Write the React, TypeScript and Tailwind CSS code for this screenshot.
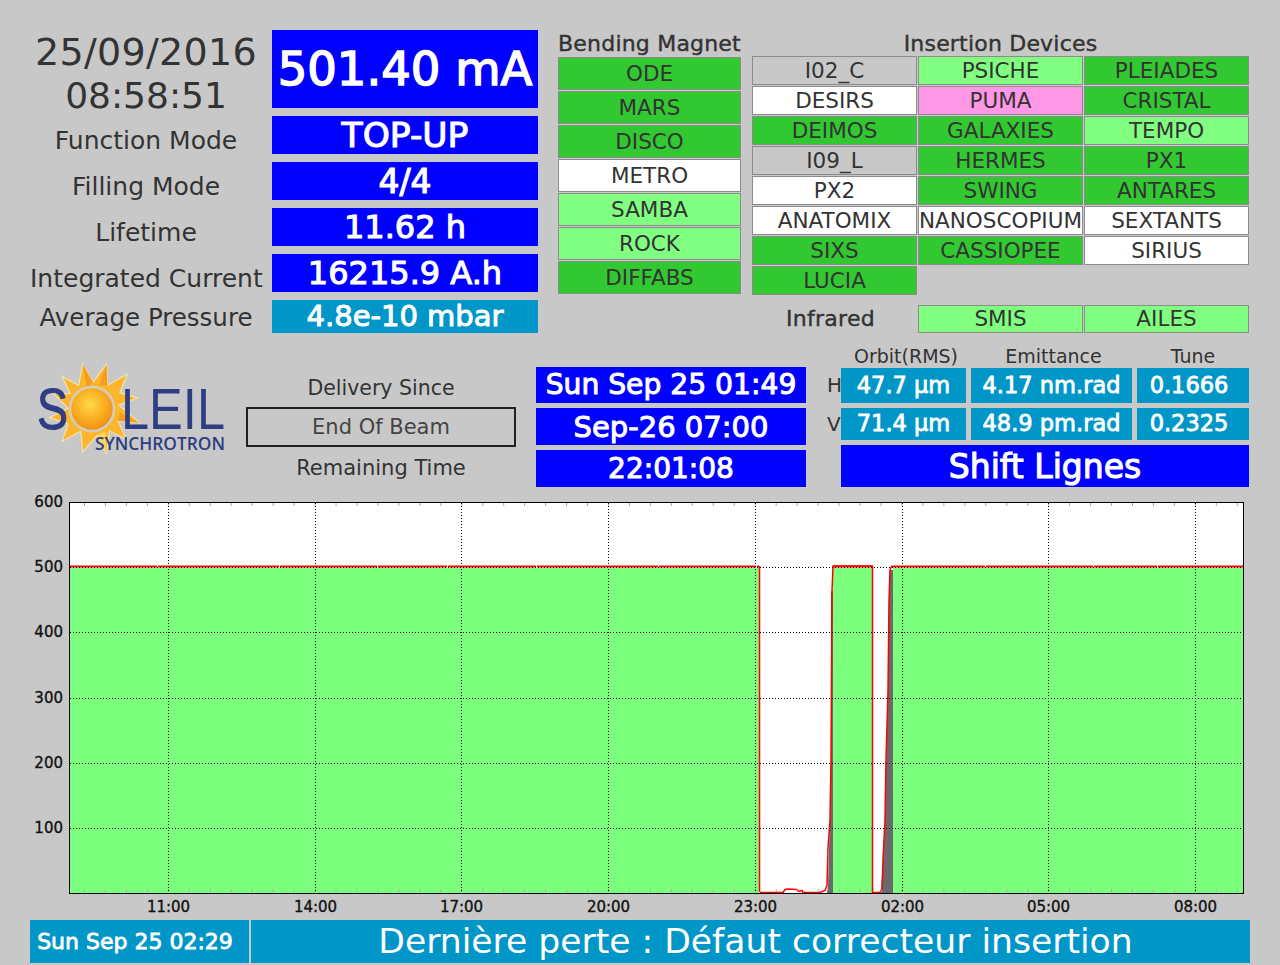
const bendingMagnets = [
  { name: "ODE", tone: "on" },
  { name: "MARS", tone: "on" },
  { name: "DISCO", tone: "on" },
  { name: "METRO", tone: "off" },
  { name: "SAMBA", tone: "open" },
  { name: "ROCK", tone: "open" },
  { name: "DIFFABS", tone: "on" },
];

const insertionDevices = [
  { name: "I02_C", tone: "idle" },
  { name: "PSICHE", tone: "open" },
  { name: "PLEIADES", tone: "on" },
  { name: "DESIRS", tone: "off" },
  { name: "PUMA", tone: "pink" },
  { name: "CRISTAL", tone: "on" },
  { name: "DEIMOS", tone: "on" },
  { name: "GALAXIES", tone: "on" },
  { name: "TEMPO", tone: "open" },
  { name: "I09_L", tone: "idle" },
  { name: "HERMES", tone: "on" },
  { name: "PX1", tone: "on" },
  { name: "PX2", tone: "off" },
  { name: "SWING", tone: "on" },
  { name: "ANTARES", tone: "on" },
  { name: "ANATOMIX", tone: "off" },
  { name: "NANOSCOPIUM", tone: "off" },
  { name: "SEXTANTS", tone: "off" },
  { name: "SIXS", tone: "on" },
  { name: "CASSIOPEE", tone: "on" },
  { name: "SIRIUS", tone: "off" },
  { name: "LUCIA", tone: "on" },
];

const toneClass: Record<string, string> = {
  on: "bg-[#32c832]",
  open: "bg-[#80ff80]",
  off: "bg-white",
  idle: "bg-[#c8c8c8]",
  pink: "bg-[#ff96e6]",
};

function Beamline({ name, tone, height }: { name: string; tone: string; height: string }) {
  return (
    <div
      className={`${toneClass[tone]} ${height} border border-[#8c8c8c] flex items-center justify-center text-[21.5px] leading-none text-[#333333] whitespace-nowrap overflow-hidden`}
    >
      {name}
    </div>
  );
}

const statusRows = [
  { label: "Function Mode", value: "TOP-UP", size: "text-[34.5px]" },
  { label: "Filling Mode", value: "4/4", size: "text-[33px]" },
  { label: "Lifetime", value: "11.62 h", size: "text-[32px]" },
  { label: "Integrated Current", value: "16215.9 A.h", size: "text-[32px]" },
];

function Logo() {
  return (
    <svg width="216" height="100" viewBox="30 358 216 100" className="block" role="img" aria-label="Soleil Synchrotron">
      <defs>
        <radialGradient id="sunCore" cx="45%" cy="40%" r="65%">
          <stop offset="0%" stopColor="#ffd94a" />
          <stop offset="60%" stopColor="#f9a81c" />
          <stop offset="100%" stopColor="#e8861a" />
        </radialGradient>
      </defs>
      <g transform="translate(0 -11.56) scale(1.034)">
        <polygon
          points="80,363 90,381 103,363 104,384 123,373 116,391 133,396 115,403 135,420 114,418 122,436 106,428 103,450 94,432 80,448 78,428 60,438 66,421 48,415 66,406 52,392 68,392 60,375 76,384"
          fill="#fbb62e"
          stroke="#f6e7b0"
          strokeWidth="1"
        />
        <polygon points="80,363 90,381 84,386" fill="#f59c1d" />
        <polygon points="103,363 104,384 96,384" fill="#f59c1d" />
        <polygon points="135,420 114,418 116,410" fill="#f59c1d" />
        <polygon points="103,450 94,432 102,428" fill="#ffd65a" />
      </g>
      <text
        x="37"
        y="429"
        fontFamily="'Liberation Sans', sans-serif"
        fontSize="58"
        fill="#2f3d83"
        stroke="#2f3d83"
        strokeWidth="1"
        textLength="31"
        lengthAdjust="spacingAndGlyphs"
      >
        S
      </text>
      <circle cx="92" cy="409" r="22" fill="url(#sunCore)" stroke="#d4cdbd" strokeWidth="2.5" />
      <text
        x="121"
        y="429"
        fontFamily="'Liberation Sans', sans-serif"
        fontSize="57"
        fill="#2f3d83"
        textLength="104"
        lengthAdjust="spacingAndGlyphs"
      >
        LEIL
      </text>
      <text
        x="95"
        y="450"
        fontFamily="'Open Sans', sans-serif"
        fontSize="18"
        fontWeight="600"
        fill="#2f3d83"
        textLength="130"
        lengthAdjust="spacingAndGlyphs"
      >
        SYNCHROTRON
      </text>
    </svg>
  );
}

// chart helpers, page coordinates inside the svg viewBox
const hours = [
  { x: 168.5, label: "11:00" },
  { x: 315.5, label: "14:00" },
  { x: 461.5, label: "17:00" },
  { x: 608.5, label: "20:00" },
  { x: 755.5, label: "23:00" },
  { x: 902.5, label: "02:00" },
  { x: 1048.5, label: "05:00" },
  { x: 1195.5, label: "08:00" },
];
const levels = [
  { y: 567.5, label: "500" },
  { y: 632.5, label: "400" },
  { y: 698.5, label: "300" },
  { y: 763.5, label: "200" },
  { y: 828.5, label: "100" },
];
const minorTicks = Array.from({ length: 56 }, (_, i) => 84.5 + i * 20.96);

function Chart() {
  const textProps = {
    fontFamily: "'DejaVu Sans', sans-serif",
    fontSize: 15,
    fill: "#111111",
    stroke: "#111111",
    strokeWidth: 0.35,
  };
  return (
    <svg width="1280" height="425" viewBox="0 490 1280 425" className="block">
      <rect x="69" y="502" width="1175" height="391" fill="#ffffff" />
      <rect x="69" y="568" width="690" height="325" fill="#7cff7c" />
      <rect x="833" y="568" width="39" height="325" fill="#7cff7c" />
      <rect x="893" y="568" width="351" height="325" fill="#7cff7c" />

      <polygon
        points="827,893 828,885 829,848 830,820 831,760 831,591 833,591 833,893"
        fill="#6a6a6a"
      />
      <polygon
        points="881,893 883,860 885,820 886,760 888,690 889,601 890,570 893,570 893,893"
        fill="#6a6a6a"
      />

      {/* beam current trace */}
      <line x1="69" x2="759" y1="566.5" y2="566.5" stroke="#ff0000" strokeWidth="2" strokeDasharray="88 1 121 1 97 1 69 1" />
      <line x1="833" x2="872" y1="566.5" y2="566.5" stroke="#ff0000" strokeWidth="2" />
      <line x1="891" x2="1244" y1="566.5" y2="566.5" stroke="#ff0000" strokeWidth="2" strokeDasharray="94 1 107 1 63 1" />
      <line x1="759.5" x2="759.5" y1="566" y2="892" stroke="#ff0000" strokeWidth="1.5" />
      <polyline
        points="760,892.5 783,892.5 785,889.5 788,889 797,889.5 799,891.5 802,890.5 803,892.5 820,892.5 825,890.5 827,885 828,848 830,820 831,760 832,591 833,566.5 833,566 872.5,566 872.5,892.5 880,892.5 882,888 883,860 885,820 886,760 888,690 889,601 890,570 891.5,566.5"
        fill="none"
        stroke="#ff0000"
        strokeWidth="1.5"
      />

      {minorTicks.map((x) => (
        <g key={x}>
          <line x1={x} x2={x} y1="503" y2="506" stroke="#aaaaaa" />
          <line x1={x} x2={x} y1="889" y2="892" stroke="#aaaaaa" />
        </g>
      ))}
      {hours.map((h) => (
        <g key={h.label}>
          <line x1={h.x} x2={h.x} y1="503" y2="893" stroke="#000000" strokeDasharray="1 2" />
          <text x={h.x} y="912" textAnchor="middle" {...textProps}>
            {h.label}
          </text>
        </g>
      ))}
      {levels.map((l) => (
        <g key={l.label}>
          <line x1="70" x2="1243" y1={l.y} y2={l.y} stroke="#000000" strokeDasharray="1 2" />
          <text x="63" y={l.y + 4.5} textAnchor="end" {...textProps}>
            {l.label}
          </text>
        </g>
      ))}
      <text x="63" y="507" textAnchor="end" {...textProps}>
        600
      </text>
      <rect x="69.5" y="502.5" width="1174" height="391" fill="none" stroke="#000000" />
    </svg>
  );
}

export default function App() {
  return (
    <div className="w-[1280px] h-[965px] overflow-hidden bg-[#c8c8c8] pt-[30px] font-['DejaVu_Sans',sans-serif] text-[#333333]">
      {/* top: status values, beamlines */}
      <section className="flex pl-[30px] h-[303px]">
        <div className="grid grid-cols-[232px_266px] grid-rows-[78px_38px_38px_38px_38px_33px] gap-x-[10px] gap-y-[8px]">
          <div className="flex flex-col items-center leading-[43px] pt-[1px]">
            <span className="text-[38px] tracking-[0.3px]">25/09/2016</span>
            <span className="text-[36px]">08:58:51</span>
          </div>
          <div className="bg-[#0000ff] text-white text-[46.5px] [-webkit-text-stroke:1.5px_white] flex items-center justify-center leading-none whitespace-nowrap">
            501.40 mA
          </div>
          {statusRows.map((row) => (
            <div key={row.label} className="contents">
              <div className="text-[25px] leading-none pt-[12px] text-center whitespace-nowrap">{row.label}</div>
              <div
                className={`bg-[#0000ff] text-white ${row.size} [-webkit-text-stroke:1.1px_white] flex items-center justify-center leading-none whitespace-nowrap`}
              >
                {row.value}
              </div>
            </div>
          ))}
          <div className="text-[24.5px] leading-none pt-[6px] text-center whitespace-nowrap">Average Pressure</div>
          <div className="bg-[#0096c8] text-white text-[29px] [-webkit-text-stroke:1px_white] flex items-center justify-center leading-none whitespace-nowrap">
            4.8e-10 mbar
          </div>
        </div>

        <div className="w-[183px] ml-[20px]">
          <div className="h-[27px] text-[22px] leading-[27px] [-webkit-text-stroke:0.4px_#333333] text-center whitespace-nowrap tracking-[0.2px]">
            Bending Magnet
          </div>
          <div className="flex flex-col gap-px">
            {bendingMagnets.map((b) => (
              <Beamline key={b.name} name={b.name} tone={b.tone} height="h-[33px]" />
            ))}
          </div>
        </div>

        <div className="w-[497px] ml-[11px]">
          <div className="h-[26px] text-[22px] leading-[27px] [-webkit-text-stroke:0.4px_#333333] text-center tracking-[0.2px]">
            Insertion Devices
          </div>
          <div className="grid grid-cols-3 gap-px">
            {insertionDevices.map((d) => (
              <Beamline key={d.name} name={d.name} tone={d.tone} height="h-[29px]" />
            ))}
          </div>
          <div className="grid grid-cols-3 gap-px mt-[10px]">
            <div className="h-[28px] pr-[8px] flex items-center justify-center text-[22px] [-webkit-text-stroke:0.4px_#333333] tracking-[0.3px] leading-none">
              Infrared
            </div>
            <Beamline name="SMIS" tone="open" height="h-[28px]" />
            <Beamline name="AILES" tone="open" height="h-[28px]" />
          </div>
        </div>
      </section>

      {/* middle: logo, delivery, orbit */}
      <section className="flex pl-[30px] h-[142px] mt-[12px]">
        <div className="w-[216px] pt-[13px]">
          <Logo />
        </div>

        <div className="w-[270px] pt-[22px] text-[21px]">
          <div className="h-[40px] pt-[2px] flex items-center justify-center text-[20.5px]">Delivery Since</div>
          <div className="h-[40px] pt-[2px] border-2 border-[#222222] flex items-center justify-center text-[#444444]">
            End Of Beam
          </div>
          <div className="h-[40px] pt-[3px] flex items-center justify-center">Remaining Time</div>
        </div>

        <div className="w-[270px] ml-[20px] pt-[22px] flex flex-col gap-[5px] text-white text-[28px] [-webkit-text-stroke:1px_white] leading-none">
          <div className="h-[36px] pt-[1px] bg-[#0000ff] flex items-center justify-center whitespace-nowrap text-[28.2px]">
            Sun Sep 25 01:49
          </div>
          <div className="h-[37px] pt-[1px] bg-[#0000ff] flex items-center justify-center text-[29px]">Sep-26 07:00</div>
          <div className="h-[37px] pt-[1px] bg-[#0000ff] flex items-center justify-center">22:01:08</div>
        </div>

        <div className="w-[423px] ml-[20px]">
          <div className="flex h-[23px] pl-[15px] gap-[5px] text-[19px] leading-[22px] text-center">
            <div className="w-[125px] pl-[5px]">Orbit(RMS)</div>
            <div className="w-[161px] pl-[4px]">Emittance</div>
            <div className="w-[112px]">Tune</div>
          </div>
          <div className="flex h-[35px]">
            <div className="w-[15px] pl-[1px] text-[20px] leading-[35px]">H</div>
            <div className="flex gap-[5px] text-white text-[22.5px] [-webkit-text-stroke:0.8px_white]">
              <div className="w-[125px] bg-[#0096c8] flex items-center justify-center">47.7 µm</div>
              <div className="w-[161px] bg-[#0096c8] flex items-center justify-center">4.17 nm.rad</div>
              <div className="w-[112px] bg-[#0096c8] pr-[8px] flex items-center justify-center">0.1666</div>
            </div>
          </div>
          <div className="flex h-[32px] mt-[5px]">
            <div className="w-[15px] pl-[1px] text-[20px] leading-[32px]">V</div>
            <div className="flex gap-[5px] text-white text-[22.5px] [-webkit-text-stroke:0.8px_white]">
              <div className="w-[125px] bg-[#0096c8] flex items-center justify-center">71.4 µm</div>
              <div className="w-[161px] bg-[#0096c8] flex items-center justify-center">48.9 pm.rad</div>
              <div className="w-[112px] bg-[#0096c8] pr-[8px] flex items-center justify-center">0.2325</div>
            </div>
          </div>
          <div className="h-[42px] mt-[5px] ml-[15px] w-[408px] bg-[#0000ff] text-white text-[33px] [-webkit-text-stroke:1.1px_white] flex items-center justify-center leading-none">
            Shift Lignes
          </div>
        </div>
      </section>

      <div className="mt-[3px]">
        <Chart />
      </div>

      {/* bottom status bar */}
      <footer className="flex gap-[2px] mt-[5px] ml-[30px] h-[43px]">
        <div className="w-[219px] pr-[9px] bg-[#0096c8] text-white text-[22px] [-webkit-text-stroke:0.8px_white] flex items-center justify-center whitespace-nowrap">
          Sun Sep 25 02:29
        </div>
        <div className="w-[999px] pl-[10px] pt-[1px] bg-[#0096c8] text-white text-[34.6px] flex items-center justify-center whitespace-nowrap">
          Dernière perte : Défaut correcteur insertion
        </div>
      </footer>
    </div>
  );
}
